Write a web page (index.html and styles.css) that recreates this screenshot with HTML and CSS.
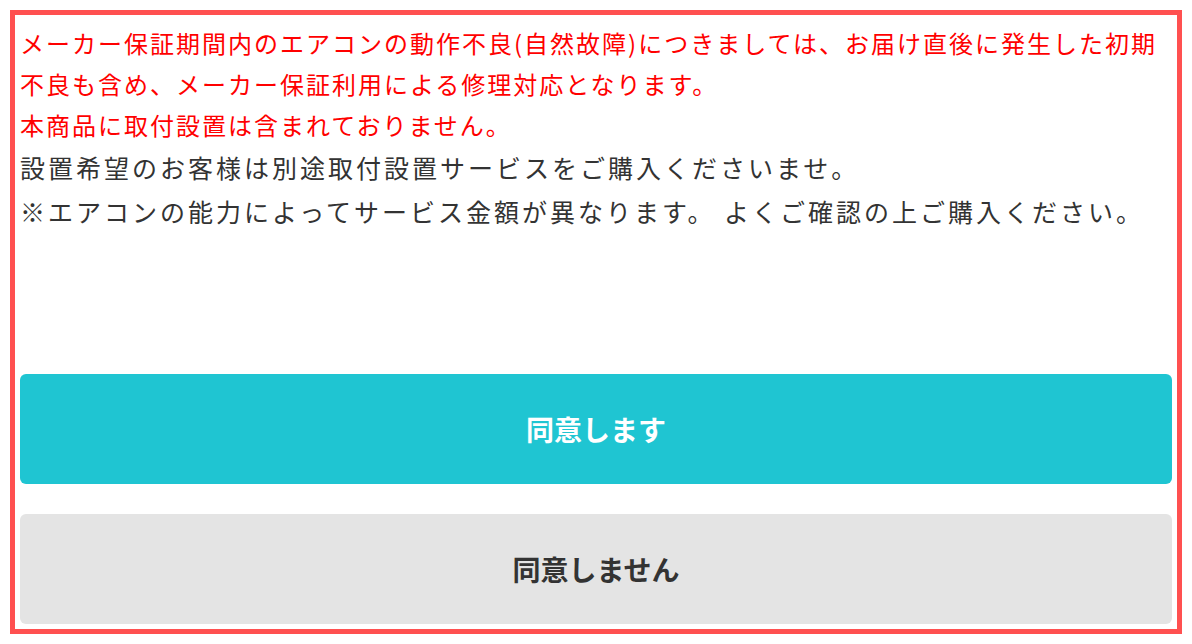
FILE: index.html
```html
<!DOCTYPE html>
<html lang="ja">
  <head>
    <meta charset="UTF-8" />
    <meta name="viewport" content="width=device-width, initial-scale=1.0" />
    <title>ご購入前の確認</title>
    <link rel="stylesheet" href="styles.css">
  </head>
  <body>
    <div class="confirm">
      <div class="notice">
        <p class="warn">メーカー保証期間内のエアコンの動作不良(自然故障)につきましては、お届け直後に発生した初期不良も含め、メーカー保証利用による修理対応となります。<br>本商品に取付設置は含まれておりません。</p>
        <p class="info">設置希望のお客様は別途取付設置サービスをご購入くださいませ。<br>※エアコンの能力によってサービス金額が異なります。 よくご確認の上ご購入ください。</p>
      </div>

      <div class="actions">
        <button class="btn agree" onclick="answer(true)">同意します</button>
        <button class="btn decline" onclick="answer(false)">同意しません</button>
      </div>
    </div>

    <script>
      // 回答を保存するだけ
      function answer(ok) {
        window.agreed = ok;
      }
    </script>
  </body>
</html>
```

FILE: styles.css
```css
html,
body {
  height: 100%;
}
body {
  margin: 0;
  padding: 10px;
  box-sizing: border-box;
  background: #fff;
  font-family: "Noto Sans CJK JP", "Noto Sans", sans-serif;
}
.confirm {
  height: 100%;
  box-sizing: border-box;
  border: 5px solid #ff5050;
  padding: 5px;
  display: flex;
  flex-direction: column;
}
.notice {
  flex: 1;
  padding-top: 2px;
  font-size: 24px;
}
.notice p {
  margin: 0;
}
.warn {
  color: #ff0000;
  line-height: 41px;
  letter-spacing: 2px;
}
.info {
  color: #333;
  font-size: 25px;
  line-height: 44px;
  letter-spacing: 3px;
}
.actions {
  display: flex;
  flex-direction: column;
  gap: 30px;
}
.btn {
  height: 110px;
  border: none;
  border-radius: 6px;
  font-family: inherit;
  font-size: 28px;
  font-weight: bold;
  cursor: pointer;
}
.agree {
  background-color: #1fc5d2;
  color: #fff;
}
.decline {
  background-color: #e4e4e4;
  color: #333;
}
```
